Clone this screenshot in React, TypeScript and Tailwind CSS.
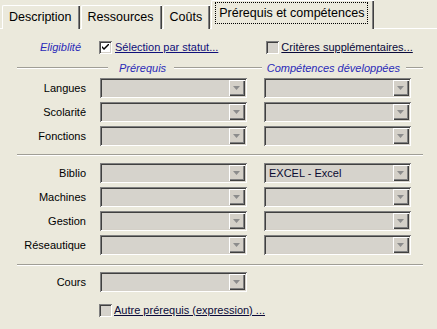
import React from "react";

const font = "font-['Liberation_Sans',Arial,sans-serif]";

const tabs = ["Description", "Ressources", "Coûts"];

const Combo: React.FC<{ value?: string }> = ({ value }) => (
  <div className="relative h-[20px] w-[147px] bg-[#d6d3cc] shadow-[inset_1px_1px_0_#808080,inset_-1px_-1px_0_#ffffff,inset_2px_2px_0_#404040,inset_-2px_-2px_0_#d4d0c8] flex items-center">
    <span className="pl-[5px] text-[11px] text-[#0a0a30] leading-none flex-1">{value}</span>
    <div className="mr-[2px] h-[16px] w-[16px] bg-[#d4d0c8] shadow-[inset_1px_1px_0_#ffffff,inset_-1px_-1px_0_#404040,inset_-2px_-2px_0_#808080] flex items-center justify-center">
      <svg width="7" height="4" viewBox="0 0 7 4" className="mb-[1px] mr-[1px]">
        <path d="M0 0h7L3.5 4z" fill="#8c8c8c" />
      </svg>
    </div>
  </div>
);

const Check: React.FC<{ checked?: boolean; disabled?: boolean }> = ({ checked, disabled }) => (
  <div
    className={`h-[13px] w-[13px] flex items-center justify-center shadow-[inset_1px_1px_0_#808080,inset_-1px_-1px_0_#ffffff,inset_2px_2px_0_#404040,inset_-2px_-2px_0_#d4d0c8] ${
      disabled ? "bg-[#d6d3cc]" : "bg-white"
    }`}
  >
    {checked && (
      <svg width="7" height="7" viewBox="0 0 7 7">
        <path d="M0 2l2 2l5-5v2l-5 5l-2-2z" fill="#000" />
      </svg>
    )}
  </div>
);

const Etched: React.FC<{ className?: string }> = ({ className }) => (
  <div className={`h-[2px] border-t border-[#a09e96] border-b border-b-white ${className ?? ""}`} />
);

const Row: React.FC<{ label: string; left?: string; right?: string; single?: boolean }> = ({ label, left, right, single }) => (
  <div className="flex items-center h-[20px]">
    <div className="w-[86px] text-right text-[11px] text-black">{label}</div>
    <div className="ml-[14px]">
      <Combo value={left} />
    </div>
    {!single && (
      <div className="ml-[17px]">
        <Combo value={right} />
      </div>
    )}
  </div>
);

export default function App() {
  return (
    <div
      className={`${font} w-[437px] h-[329px] overflow-hidden bg-[#ebe9dc] bg-[radial-gradient(#dedbcd_0.6px,transparent_0.6px)] bg-[size:5px_4px]`}
    >
      {/* tab strip */}
      <div className="h-[29px] flex items-end pl-[2px] border-b border-white">
        {tabs.map((t) => (
          <div
            key={t}
            className="h-[24px] mb-[-1px] px-[6px] mr-[1px] flex items-center border-t border-l border-white rounded-tl-[2px] shadow-[inset_-1px_0_0_#404040,inset_-2px_0_0_#808080] text-[12.5px] text-black bg-[#ebe9dc]"
          >
            <span className="pr-[2px]">{t}</span>
          </div>
        ))}
        <div className="h-[29px] mb-[-1px] px-[3px] flex items-center border-t border-l border-white rounded-tl-[2px] shadow-[inset_-1px_0_0_#404040,inset_-2px_0_0_#808080] bg-[#ebe9dc]">
          <span className="mb-[4px] border border-dotted border-black px-[3px] py-[1px] text-[12.5px] text-black mr-[3px]">
            Prérequis et compétences
          </span>
        </div>
      </div>

      {/* eligibility */}
      <div className="mt-[10px] h-[16px] flex items-center">
        <div className="w-[86px] pr-[5px] text-right text-[11px] italic text-[#2a2ab8]">Eligiblité</div>
        <div className="ml-[13px] flex items-center">
          <Check checked />
          <span className="ml-[3px] text-[11px] underline text-[#10107a]">Sélection par statut...</span>
        </div>
        <div className="ml-[48px] flex items-center">
          <Check disabled />
          <span className="ml-[2px] text-[11px] underline text-[#0a0a3a]">Critères supplémentaires...</span>
        </div>
      </div>

      {/* headings */}
      <div className="mt-[6px] h-[14px] flex items-center pl-[17px] pr-[14px] text-[11px] italic text-[#2a2ab8]">
        <Etched className="w-[91px]" />
        <span className="ml-[11px]">Prérequis</span>
        <Etched className="ml-[8px] flex-1" />
        <span className="ml-[5px]">Compétences développées</span>
        <Etched className="ml-[6px] w-[17px]" />
      </div>

      <div className="mt-[3px] flex flex-col gap-[4px]">
        <Row label="Langues" />
        <Row label="Scolarité" />
        <Row label="Fonctions" />
      </div>

      <Etched className="mt-[8px] ml-[17px] w-[406px]" />

      <div className="mt-[7px] flex flex-col gap-[4px]">
        <Row label="Biblio" right="EXCEL - Excel" />
        <Row label="Machines" />
        <Row label="Gestion" />
        <Row label="Réseautique" />
      </div>

      <Etched className="mt-[9px] ml-[17px] w-[406px]" />

      <div className="mt-[6px]">
        <Row label="Cours" single />
      </div>

      <div className="mt-[10px] ml-[99px] flex items-center">
        <Check disabled />
        <span className="ml-[2px] text-[11px] underline text-[#0a0a3a]">Autre prérequis (expression) ...</span>
      </div>
    </div>
  );
}
